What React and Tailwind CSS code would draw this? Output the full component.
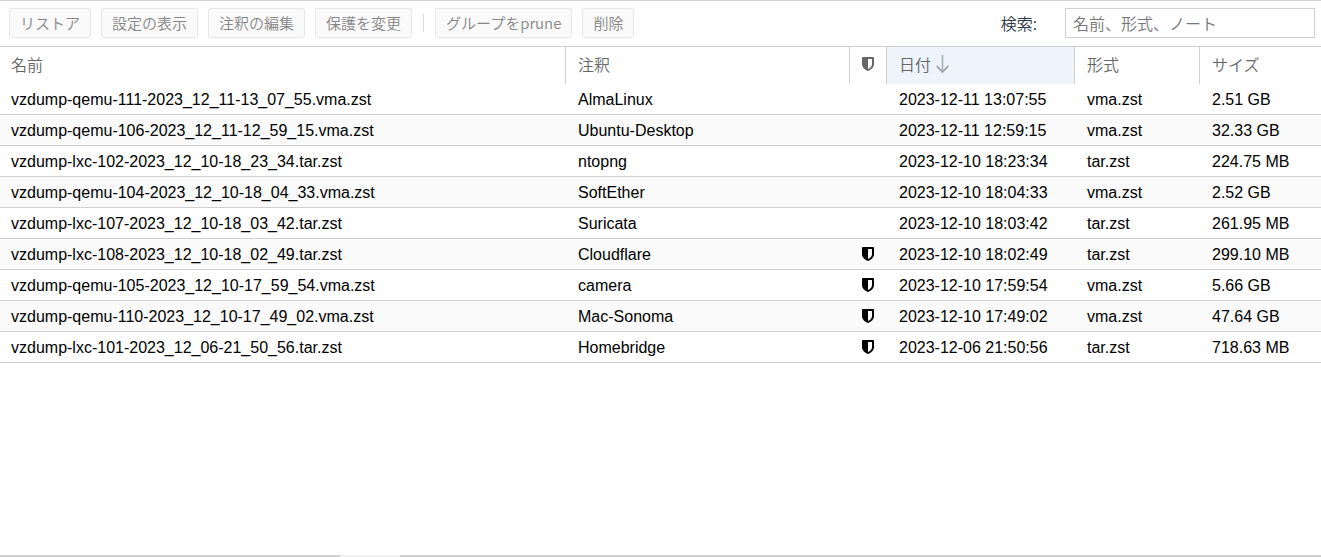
const backups = [
  { name: 'vzdump-qemu-111-2023_12_11-13_07_55.vma.zst', note: 'AlmaLinux', locked: false, date: '2023-12-11 13:07:55', format: 'vma.zst', size: '2.51 GB' },
  { name: 'vzdump-qemu-106-2023_12_11-12_59_15.vma.zst', note: 'Ubuntu-Desktop', locked: false, date: '2023-12-11 12:59:15', format: 'vma.zst', size: '32.33 GB' },
  { name: 'vzdump-lxc-102-2023_12_10-18_23_34.tar.zst', note: 'ntopng', locked: false, date: '2023-12-10 18:23:34', format: 'tar.zst', size: '224.75 MB' },
  { name: 'vzdump-qemu-104-2023_12_10-18_04_33.vma.zst', note: 'SoftEther', locked: false, date: '2023-12-10 18:04:33', format: 'vma.zst', size: '2.52 GB' },
  { name: 'vzdump-lxc-107-2023_12_10-18_03_42.tar.zst', note: 'Suricata', locked: false, date: '2023-12-10 18:03:42', format: 'tar.zst', size: '261.95 MB' },
  { name: 'vzdump-lxc-108-2023_12_10-18_02_49.tar.zst', note: 'Cloudflare', locked: true, date: '2023-12-10 18:02:49', format: 'tar.zst', size: '299.10 MB' },
  { name: 'vzdump-qemu-105-2023_12_10-17_59_54.vma.zst', note: 'camera', locked: true, date: '2023-12-10 17:59:54', format: 'vma.zst', size: '5.66 GB' },
  { name: 'vzdump-qemu-110-2023_12_10-17_49_02.vma.zst', note: 'Mac-Sonoma', locked: true, date: '2023-12-10 17:49:02', format: 'vma.zst', size: '47.64 GB' },
  { name: 'vzdump-lxc-101-2023_12_06-21_50_56.tar.zst', note: 'Homebridge', locked: true, date: '2023-12-06 21:50:56', format: 'tar.zst', size: '718.63 MB' },
]

function Shield() {
  return (
    <svg viewBox="0 0 12 14" className="mx-auto block h-[14px] w-3" fill="currentColor" aria-hidden="true">
      <path
        fillRule="evenodd"
        d="M1 0H11Q12 0 12 1V7.2C12 10.6 8.8 12.8 6 14C3.2 12.8 0 10.6 0 7.2V1Q0 0 1 0ZM6 2V12C8.2 10.9 10 9.4 10 7.2V2Z"
      />
    </svg>
  )
}

function SortArrow() {
  return (
    <svg viewBox="0 0 13 18" className="h-[18px] w-[13px]" fill="none" stroke="#a3a6a9" aria-hidden="true">
      <path d="M6.5 0V17" strokeWidth="1.4" />
      <path d="M0.7 11L6.5 17L12.3 11" strokeWidth="1.8" />
    </svg>
  )
}

function ToolButton({ children }) {
  return (
    <button
      type="button"
      disabled
      className="flex h-[30px] shrink-0 items-center rounded-[3px] border border-[#e6e6e6] bg-[#fafafa] px-[10px] pb-px text-[15px] leading-5 whitespace-nowrap text-[#868686]"
    >
      {children}
    </button>
  )
}

const head = 'border-r border-[#cfcfcf] px-3 pb-[3px] text-left font-[350]'
const cell = 'truncate border-b border-[#cfcfcf] px-3 pt-0.5'

export default function App() {
  return (
    <div className="flex min-h-screen flex-col border-t border-[#cfcfcf] bg-white font-['Noto_Sans_CJK_JP',sans-serif] text-base">
      <header className="flex items-center justify-between border-b border-[#cfcfcf] pt-[7px] pr-[6px] pb-2 pl-[9px]">
        <div className="flex items-center gap-[10px] font-[350]">
          <ToolButton>リストア</ToolButton>
          <ToolButton>設定の表示</ToolButton>
          <ToolButton>注釈の編集</ToolButton>
          <ToolButton>保護を変更</ToolButton>
          <span className="mx-px h-[18px] w-px bg-[#d9d9d9]" />
          <ToolButton>グループをprune</ToolButton>
          <ToolButton>削除</ToolButton>
        </div>
        <div className="flex items-center gap-7 font-[350]">
          <label htmlFor="search" className="whitespace-nowrap text-[#2d3a45]">検索:</label>
          <input
            id="search"
            type="text"
            placeholder="名前、形式、ノート"
            className="h-[30px] w-[250px] border border-[#cfcfcf] bg-white px-[7px] text-base leading-5 text-black outline-none placeholder:text-[#757575]"
          />
        </div>
      </header>

      <main className="grow">
        <table className="w-full table-fixed border-separate border-spacing-0">
          <colgroup>
            <col />
            <col className="w-[284px]" />
            <col className="w-[37px]" />
            <col className="w-[188px]" />
            <col className="w-[125px]" />
            <col className="w-[121px]" />
          </colgroup>
          <thead className="text-[#666666]">
            <tr className="h-[37px]">
              <th scope="col" className="border-r border-[#cfcfcf] pr-3 pb-[3px] pl-[11px] text-left font-[350]">名前</th>
              <th scope="col" className={head}>注釈</th>
              <th scope="col" aria-label="保護" className="border-r border-[#cfcfcf] pb-[3px]"><Shield /></th>
              <th scope="col" aria-sort="descending" className="border-r border-[#cfcfcf] bg-[#edf4fb] px-3 pb-[3px] text-left font-[350]">
                <span className="flex items-center gap-[5px]">日付<SortArrow /></span>
              </th>
              <th scope="col" className={head}>形式</th>
              <th scope="col" className="px-3 pb-[3px] text-left font-[350]">サイズ</th>
            </tr>
          </thead>
          <tbody className="font-['Liberation_Sans',Arial,sans-serif] text-black">
            {backups.map((b) => (
              <tr key={b.name} className="h-[31px] even:bg-[#fafafa]">
                <td className="truncate border-b border-[#cfcfcf] pt-0.5 pr-3 pl-[11px]">{b.name}</td>
                <td className={cell}>{b.note}</td>
                <td className="border-b border-[#cfcfcf] pr-px">{b.locked && <Shield />}</td>
                <td className={cell}>{b.date}</td>
                <td className={cell}>{b.format}</td>
                <td className={cell}>{b.size}</td>
              </tr>
            ))}
          </tbody>
        </table>
      </main>

      <footer className="flex h-[2px] bg-[#cfcfcf] pl-[340px]">
        <span className="w-[60px] bg-[#efefef]" />
      </footer>
    </div>
  )
}
